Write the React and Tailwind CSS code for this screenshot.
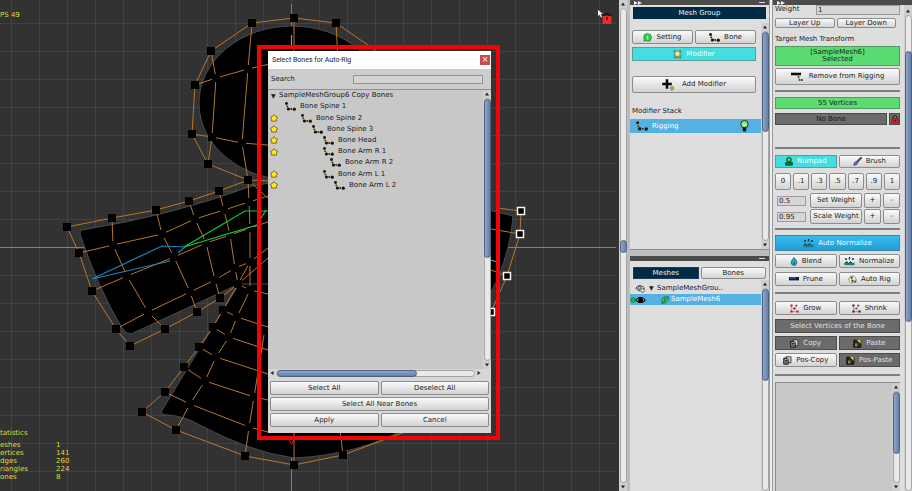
import React from "react";
import clsx from "clsx";

/* ---------- icons ---------- */

const BoneIcon = ({ className = "h-[9px] w-[11px]" }) => (
  <svg viewBox="0 0 11 9" className={clsx("shrink-0", className)} aria-hidden="true">
    <path d="M1.5 1.5 3.2 6.8" stroke="#b8c860" strokeWidth="1.8" />
    <path d="M3.5 7h5" stroke="#e8b088" strokeWidth="1.8" />
    <circle cx="1.5" cy="1.5" r="1.4" fill="#111" />
    <circle cx="2.2" cy="4.4" r="0.8" fill="#222" />
    <circle cx="3.4" cy="7" r="1.6" fill="#111" />
    <circle cx="6.2" cy="7" r="0.9" fill="#222" />
    <circle cx="9.3" cy="7.2" r="1.6" fill="#111" />
  </svg>
);

const StarIcon = () => (
  <svg viewBox="0 0 10 10" className="h-2 w-2" aria-hidden="true">
    <path d="M5 .8 6.8 3 9.4 4 8 6.4 7.9 9.1 5 8.7 2.1 9.1 2 6.4.6 4 3.2 3Z" fill="#ffe818" stroke="#75600c" strokeWidth="1.1" strokeLinejoin="round" />
  </svg>
);

const SettingIcon = () => (
  <svg viewBox="0 0 10 10" className="h-[9px] w-[9px]" aria-hidden="true">
    <path d="M2 1.5 5 .7 8.5 2 9.4 5 8 8.6 5 9 2.5 8.2 1 9 1.5 7 .8 4.5Z" fill="#28d848" stroke="#187030" strokeWidth=".8" />
    <path d="M5 3v4" stroke="#c8ffc8" strokeWidth="1.4" />
  </svg>
);

const ModifierIcon = () => (
  <svg viewBox="0 0 9 9" className="h-[9px] w-[9px]" aria-hidden="true">
    <rect x=".5" y=".5" width="8" height="8" rx="1" fill="#5aa8a0" />
    <circle cx="4.5" cy="3.8" r="2.2" fill="#ffe870" />
    <path d="M3.5 6.2h2v1.8h-2z" fill="#c87818" />
    <path d="M1 1h1.5M6.5 1H8M1 7.5h1.5M6.5 7.5H8" stroke="#2a6a70" />
  </svg>
);

const AddIcon = () => (
  <svg viewBox="0 0 12 12" className="h-3 w-3" aria-hidden="true">
    <path d="M5 .2v9.600M.2 5h9.600" stroke="#0a0a0a" strokeWidth="2.600" />
    <circle cx="10" cy="9" r="1.6" fill="#e8c030" stroke="#5a4a10" strokeWidth=".6" />
    <path d="M9.5 10.6h1v1h-1z" fill="#444" />
  </svg>
);

const BulbIcon = () => (
  <svg viewBox="0 0 9 12" className="h-3 w-[9px]" aria-hidden="true">
    <circle cx="4.5" cy="4.2" r="3.7" fill="#98e080" stroke="#1c3820" strokeWidth="1" />
    <path d="M3.4 4 4.5 6 5.6 4" fill="none" stroke="#f4ffe0" />
    <path d="M2.7 7.6h3.6v3L5 11.8H4l-1.3-1.2z" fill="#151515" />
  </svg>
);

const EyeOffIcon = () => (
  <svg viewBox="0 0 10 9" className="h-[9px] w-[10px]" aria-hidden="true">
    <path d="M.8 4Q4 0 8.5 3M.8 4Q3 7 5 6.8" fill="none" stroke="#333" />
    <circle cx="4.5" cy="3.8" r="1.4" fill="none" stroke="#333" strokeWidth=".9" />
    <circle cx="7.6" cy="6.6" r="1.8" fill="#eee" stroke="#444" strokeWidth=".8" />
    <path d="M9 3.5v1.8" stroke="#333" />
  </svg>
);

const EyeIcon = () => (
  <svg viewBox="0 0 16 8" className="h-2 w-4" aria-hidden="true">
    <circle cx="3" cy="4" r="2.3" fill="#18c838" stroke="#0c7020" strokeWidth=".7" />
    <path d="M5.8 4Q10.5-1.2 15.3 4 10.5 9 5.8 4Z" fill="#cde" stroke="#111" strokeWidth="1.1" />
    <circle cx="10.6" cy="4" r="2.5" fill="#0a0a0a" />
  </svg>
);

const MeshIcon = () => (
  <svg viewBox="0 0 8 8" className="h-2 w-2" aria-hidden="true">
    <path d="M1 3 3 1 7.2.8 7 4.6 4.8 6.8.8 7.4Z" fill="#2ed060" stroke="#146840" strokeWidth=".8" />
    <path d="M1 7 7 1M3 1l1.5 5.6" stroke="#146840" strokeWidth=".7" />
  </svg>
);

const LockIcon = ({ className }) => (
  <svg viewBox="0 0 10 12" className={className} aria-hidden="true">
    <path d="M2 5V3.4Q2.4 1 5 1T8 3.4V5" fill="none" stroke="#30201f" strokeWidth="1.4" />
    <rect x=".5" y="5" width="9" height="6" rx="1" fill="#c9272b" stroke="#601010" strokeWidth=".6" />
    <path d="M4.2 6.4h1.6v2.4H4.2z" fill="#3a0808" />
  </svg>
);

const RemoveIcon = () => (
  <svg viewBox="0 0 12 9" className="h-[9px] w-3" aria-hidden="true">
    <path d="M0 2h10" stroke="#0a0a0a" strokeWidth="2.6" />
    <path d="M7.5 4.5 8.5 8M8.5 8H11" stroke="#b89050" />
    <circle cx="7.5" cy="4.8" r=".9" fill="#222" />
    <circle cx="8.5" cy="8" r=".9" fill="#a22" />
    <circle cx="11" cy="8" r=".9" fill="#222" />
  </svg>
);

const NumpadIcon = () => (
  <svg viewBox="0 0 8 9" className="h-[9px] w-2" aria-hidden="true">
    <circle cx="4" cy="2.8" r="2.4" fill="#1cb04c" stroke="#0b4a28" strokeWidth=".9" />
    <path d="M.6 5.4h6.8v2.8H.6z" fill="#0c7048" stroke="#083828" strokeWidth=".7" />
    <path d="M3 2.8h2M4 1.8v2" stroke="#6f8" strokeWidth=".8" />
  </svg>
);

const BrushIcon = () => (
  <svg viewBox="0 0 9 9" className="h-[9px] w-[9px]" aria-hidden="true">
    <path d="M8 1 4.4 4.6" stroke="#8a2a9c" strokeWidth="2.2" strokeLinecap="round" />
    <path d="M.8 8.2Q1 5 3 4.4L4.8 6Q4 8.2.8 8.2Z" fill="#4a90d8" stroke="#3a1460" strokeWidth=".7" />
  </svg>
);

const NormalizeIcon = () => (
  <svg viewBox="0 0 11 9" className="h-[9px] w-[11px]" aria-hidden="true">
    <path d="M.5 6.500 2.500 4.600 4.500 6.500 6.500 4.600 8.500 6.500 10.500 5V8.200H.5Z" fill="#1d7f7c" />
    <path d="M.5 6.500 2.500 4.600 4.500 6.500 6.500 4.600 8.500 6.500" fill="none" stroke="#123a58" />
    <path d="M2 1v2M5.5 0v2.4M9 1v2" stroke="#15252c" strokeWidth="1.4" />
  </svg>
);

const DropIcon = () => (
  <svg viewBox="0 0 8 9" className="h-[9px] w-2" aria-hidden="true">
    <path d="M4 .5Q7.4 4.2 6.8 6.2 6 8.6 4 8.6T1.2 6.2Q.6 4.2 4 .5Z" fill="#20b8a0" stroke="#125878" strokeWidth=".7" />
    <path d="M4 4Q6 6 4 8 2 7 4 4Z" fill="#2a60d8" />
  </svg>
);

const PruneIcon = () => (
  <svg viewBox="0 0 10 4" className="h-1 w-[10px]" aria-hidden="true">
    <rect width="10" height="3.4" fill="#0f1c30" />
    <rect x="1" y=".4" width="6" height="1.3" fill="#2868c0" />
  </svg>
);

const AutoRigIcon = () => (
  <svg viewBox="0 0 10 10" className="h-[9px] w-[9px]" aria-hidden="true">
    <circle cx="5" cy="5" r="4" fill="#e4ebd4" stroke="#56604c" strokeDasharray="2 1" />
    <path d="M4 3 5 6.6 8 7" fill="none" stroke="#94a030" strokeWidth="1.3" />
    <circle cx="4" cy="2.8" r="1" fill="#222" />
    <circle cx="5" cy="6.6" r="1" fill="#222" />
    <circle cx="8.2" cy="7.4" r="1.2" fill="#28883c" />
  </svg>
);

const DotsIcon = ({ red }) => (
  <svg viewBox="0 0 9 9" className="h-[9px] w-[9px]" aria-hidden="true">
    <path d="M1.500 1.500V7.500H7.500M1.500 4.500H4.500" fill="none" stroke="#99a" strokeWidth=".8" />
    <g fill={red ? "#c41c24" : "#2c2c34"}>
      <path d="M.4.4h2.2v2.2H.4zM.4 6.4h2.2v2.2H.4zM6.4 6.4h2.2v2.2H6.4zM5.4.8h1.8v1.8H5.4z" />
    </g>
    <path d="M3.6 3.6h1.8v1.8H3.6z" fill={red ? "#222" : "#c41c24"} />
  </svg>
);

const CopyIcon = () => (
  <svg viewBox="0 0 9 9" className="h-[9px] w-[9px]" aria-hidden="true">
    <path d="M3 .8h5v6H3z" fill="#ccc" stroke="#222" strokeWidth=".8" />
    <path d="M.8 2.2h3l1.4 1.4v4.6H.8z" fill="#999" stroke="#111" />
    <path d="M2 4.5h2M2 6.2h2" stroke="#111" strokeWidth=".8" />
  </svg>
);

const PasteIcon = () => (
  <svg viewBox="0 0 9 9" className="h-[9px] w-[9px]" aria-hidden="true">
    <path d="M.8 1.2h7v7h-7z" fill="#2b2a1c" stroke="#111" />
    <path d="M3.6.8H7.6v4Z" fill="#e8c840" />
    <path d="M2 4.5h2.4v3H2z" fill="#8a8350" />
  </svg>
);

/* ---------- controls ---------- */

const TONES = {
  light: "border-[#8c8c8c] bg-linear-to-b from-[#fafafa] to-[#d3d3d3] text-[#1c1c1c] rounded-[2px]",
  cyan: "border-[#5b9c9c] bg-[#43dfe0] text-[#f2ffff]",
  blue: "border-[#3c88aa] bg-linear-to-b from-[#38bbee] to-[#1d9fd6] text-[#effbff]",
  navy: "border-[#1b3c52] bg-[#012b45] text-[#e8eff4]",
  gray: "border-[#4b4b4b] bg-[#6b6b6b] text-[#e0e0e0]",
};

function Btn({ tone = "light", icon, className, children, ...rest }) {
  return (
    <button
      type="button"
      className={clsx("flex min-w-0 items-center justify-center gap-1 whitespace-nowrap border leading-none", TONES[tone], className)}
      {...rest}
    >
      {icon}
      {children}
    </button>
  );
}

const Row = ({ className, children }) => <div className={clsx("flex gap-[2px]", className)}>{children}</div>;

const Rule = ({ className }) => <hr className={clsx("h-[2px] border-0 bg-[#7e7e7e]", className)} />;

const Arrow = ({ dir }) => (
  <svg viewBox="0 0 6 6" className="m-px h-[6px] w-[6px] shrink-0" aria-hidden="true">
    <path d={{ up: "M1 4.5h4L3 1.5Z", down: "M1 1.5h4L3 4.5Z", left: "M4.5 1v4L1.5 3Z", right: "M1.5 1v4L4.5 3Z" }[dir]} fill="#222" />
  </svg>
);

/* Vertical scroll bar; the thumb's offset and length come in as classes. */
function VBar({ thumb, className, down = true }) {
  return (
    <div className={clsx("flex w-2 shrink-0 flex-col items-center bg-[#cfcfcf]", className)}>
      <Arrow dir="up" />
      <div className="w-[7px] flex-1 rounded-full border border-[#a4a4a4] bg-[#e9e9e9]">
        <div className={clsx("-mx-px rounded-full border border-[#4c617f] bg-linear-to-r from-[#91a6c8] to-[#647ea6]", thumb)} />
      </div>
      {down && <Arrow dir="down" />}
    </div>
  );
}

/* ---------- viewport drawing ---------- */

const OUTER = [
  [294, 18], [252, 23], [211, 51], [195, 85], [192, 134], [208, 164], [248, 180], [219, 191], [189, 201], [156, 210],
  [112, 218], [67, 227], [79, 253], [92, 291], [116, 329], [130, 346], [165, 329], [197, 312], [220, 298], [238, 284],
  [223, 310], [213, 327], [199, 347], [184, 367], [165, 392], [142, 412], [176, 430], [245, 456], [294, 465], [343, 455],
];
const INNER = [
  [216, 78], [248, 69], [212, 137], [242, 143], [113, 245], [162, 234], [195, 219], [224, 210], [249, 202],
  [127, 276], [174, 257], [206, 243], [230, 235], [250, 228], [148, 312], [190, 292], [215, 280], [235, 268], [250, 262],
  [250, 290], [237, 317], [229, 337], [216, 357], [205, 381], [190, 404], [249, 427], [254, 397],
];
const EDGES = [
  "195,85 216,78 248,69 292,59", "192,134 212,137 242,143 292,147",
  "211,51 216,78 212,137 208,164", "252,23 248,69 242,143 248,180",
  "294,18 294,60", "336,23 338,60", "248,180 292,182", "248,180 270,200",
  "112,218 113,245 127,276 148,312 165,329", "156,210 162,234 174,257 190,292 197,312",
  "189,201 195,219 206,243 215,280 220,298", "219,191 224,210 230,235 235,268 238,284",
  "248,180 249,202 250,228 250,262 238,284",
  "79,253 113,245 162,234 195,219 224,210 249,202 268,196",
  "92,291 127,276 174,257 206,243 230,235 250,228 268,222",
  "116,329 148,312 190,292 215,280 235,268 250,262 268,248",
  "238,284 268,258", "238,284 250,290 268,294", "250,262 250,290",
  "250,290 237,317 229,337 216,357 205,381 190,404 176,430", "223,310 237,317 268,327",
  "213,327 229,337 268,350", "199,347 216,357 268,374", "184,367 205,381 254,397 268,400",
  "165,392 190,404 249,427 268,432", "245,456 249,427 254,397 264,335", "294,465 294,430", "343,455 340,430",
  "497,208 521,211", "491,229 520,234", "491,270 507,276", "521,211 520,234 507,276 491,312 480,330",
];
const SELECTED = [[521, 211], [520, 234], [507, 276], [491, 312]];

function Viewport() {
  const outline = OUTER.map((p) => p.join(",")).join(" ");
  return (
    <svg viewBox="0 0 619 491" preserveAspectRatio="xMinYMin slice" className="block h-full w-full" role="img" aria-label="Mesh viewport">
      <defs>
        <pattern id="grid" x="11" y="23" width="28" height="28" patternUnits="userSpaceOnUse">
          <path d="M.5 0V28M0 .5H28" stroke="#414141" />
        </pattern>
      </defs>
      <rect width="619" height="491" fill="#323232" />
      <rect width="616" height="491" fill="url(#grid)" />
      <path d="M0 247.5H616M291.5 4V491" stroke="#848a36" />
      <g fill="#000" stroke="#4a4a4a" strokeWidth="1">
        <ellipse cx="292" cy="103" rx="93" ry="77" />
        <path d="M82 230Q170 216 252 186L300 178V300L239 284 131 334Q126 334 122 328 98 288 80 234Q80 231 82 230Z" />
        <path d="M239 284 161 412Q162 415 168 415 184 416 200 425 250 452 294 458 360 455 410 426L440 410V284Z" />
        <path d="M480 208 513 216Q511 246 498 278L480 314Z" />
      </g>
      <g fill="none" stroke="#b9762c" strokeWidth="1">
        <polyline points={outline} />
        <path d="M294 18 336 23 375 50M343 455 410 430" />
        {EDGES.map((e) => <polyline key={e} points={e} />)}
      </g>
      {INNER.map(([x, y]) => <rect key={x + "-" + y} x={x - 4} y={y - 4} width="8" height="8" />)}
      {[...OUTER, [336, 23]].map(([x, y]) => <rect key={x + "-" + y} x={x - 4} y={y - 4} width="8" height="8" />)}
      {SELECTED.map(([x, y]) => <rect key={x + "-" + y} x={x - 3.5} y={y - 3.5} width="7" height="7" stroke="#f4f4f4" strokeWidth="1.5" />)}
      <path d="M178 253 185 247 162 246 92 279 170 261" fill="none" stroke="#1f83bd" strokeWidth="1.2" />
      <path d="M268 211H245L184 247 257 225 266 210" fill="none" stroke="#18c838" strokeWidth="1.2" />
      <path d="M291.5 35V48" stroke="#e068e0" strokeWidth="1.2" />
      <path d="M491 260 497 262" stroke="#22b8b8" strokeWidth="1.2" />
      <path d="m289 440 2.500 4 2.500-4" fill="none" stroke="#e01818" />
      <path d="M598 10v6l1.500-1.500 1.500 3 1-.5-1.300-3H603Z" fill="#fff" />
      <path d="M603 16Q607 11 611 16" fill="none" stroke="#151515" strokeWidth="1.4" />
      <rect x="602.500" y="16" width="9" height="8" rx="1" fill="#ea2c2c" />
      <path d="M606 17h2v3h-2z" fill="#501010" />
    </svg>
  );
}

/* ---------- dialog ---------- */

const BONES = [
  ["Bone Spine 1", "pl-[4px]", false],
  ["Bone Spine 2", "pl-[20px]", true],
  ["Bone Spine 3", "pl-[31px]", true],
  ["Bone Head", "pl-[42px]", true],
  ["Bone Arm R 1", "pl-[42px]", true],
  ["Bone Arm R 2", "pl-[49px]", false],
  ["Bone Arm L 1", "pl-[42px]", true],
  ["Bone Arm L 2", "pl-[53px]", true],
];

function Dialog() {
  return (
    <div className="absolute left-[257px] top-[45px] w-[243px] border-4 border-[#f00404] pb-[3px] pl-[7px] pr-[5px] pt-[2px]">
      <section role="dialog" aria-label="Select Bones for Auto-Rig" className="flex h-[382px] flex-col bg-[#d6d6d6]">
        <header className="flex h-[18px] items-center justify-between bg-white pl-1 pr-px">
          <h2 className="font-['Roboto'] text-[7px] leading-none text-[#222]">Select Bones for Auto-Rig</h2>
          <button type="button" aria-label="Close" className="flex h-[10px] w-[10px] items-center justify-center bg-[#c94b50] text-[8px] leading-none text-white">×</button>
        </header>
        <div className="flex h-5 items-center bg-[#cdcdcd] pl-[3px] pr-2">
          <label htmlFor="search" className="w-[82px]">Search</label>
          <input id="search" type="text" className="h-[9px] min-w-0 flex-1 border border-[#939393] bg-[#d4d4d4]" />
        </div>
        <div className="flex min-h-0 flex-1 border-t border-[#8e8e8e]">
          <div className="min-w-0 flex-1 bg-[#c8c8c8]">
            <ul className="flex h-[101px] flex-col">
              <li className="flex flex-1 items-center pl-[3px]">
                <span className="w-2 text-[6px] leading-none">▼</span>
                SampleMeshGroup6 Copy Bones
              </li>
              {BONES.map(([name, indent, near]) => (
                <li key={name} className="flex flex-1 items-center pl-[2px]">
                  <span className="w-[11px] shrink-0">{near && <StarIcon />}</span>
                  <span className={clsx("flex items-center gap-1", indent)}><BoneIcon />{name}</span>
                </li>
              ))}
            </ul>
          </div>
          <VBar thumb="h-[159px]" />
        </div>
        <div className="flex h-2 items-center">
          <Arrow dir="left" />
          <div className="h-[7px] flex-1 rounded-full border border-[#a4a4a4] bg-[#e9e9e9]">
            <div className="-my-px h-[7px] w-[140px] rounded-full border border-[#4c617f] bg-linear-to-b from-[#91a6c8] to-[#647ea6]" />
          </div>
          <Arrow dir="right" />
          <span className="w-2" />
        </div>
        <div className="flex flex-col gap-[2px] px-[2px] pb-[6px] pt-1">
          <Row><Btn className="h-[14px] flex-1">Select All</Btn><Btn className="h-[14px] flex-1">Deselect All</Btn></Row>
          <Btn className="h-[14px]">Select All Near Bones</Btn>
          <Row><Btn className="h-[14px] flex-1">Apply</Btn><Btn className="h-[14px] flex-1">Cancel</Btn></Row>
        </div>
      </section>
    </div>
  );
}

/* ---------- side panels ---------- */

const PanelBar = ({ fold }) => (
  <div className="flex h-[5px] items-center justify-between bg-[#4b4b4b] px-1">
    <svg viewBox="0 0 8 4" className="h-1 w-2" aria-hidden="true">{fold && <path d="M0 0 4 2 0 4M4 0 8 2 4 4" fill="#eee" />}</svg>
    <span className="h-px w-[6px] bg-[#ddd]" />
  </div>
);

function MeshPanels() {
  return (
    <aside className="flex w-[139px] shrink-0 flex-col">
      <section className="flex h-[250px] flex-col border-b border-[#8d8d8d] bg-[#dedede]">
        <PanelBar fold />
        <h2 className="mx-[3px] mt-[2px] flex h-3 items-center justify-center bg-[#012b45] text-[#e8eff4]">Mesh Group</h2>
        <div className="mt-1 flex min-h-0 flex-1">
          <div className="flex min-w-0 flex-1 flex-col">
            <Row className="ml-[2px] mr-[5px] mt-[7px]">
              <Btn className="h-[14px] flex-1" icon={<SettingIcon />}>Setting</Btn>
              <Btn className="h-[14px] flex-1" icon={<BoneIcon />}>Bone</Btn>
            </Row>
            <Btn tone="cyan" className="ml-[2px] mr-[5px] mt-[3px] h-[14px]" icon={<ModifierIcon />}>Modifier</Btn>
            <Btn className="ml-[2px] mr-[5px] mt-[15px] h-[17px]" icon={<AddIcon />}>
              <span className="pl-1">Add Modifier</span>
            </Btn>
            <h3 className="ml-[2px] mt-[14px] h-[12px]">Modifier Stack</h3>
            <div className="flex h-[14px] items-center gap-1 bg-[#55b0e4] pl-[6px] pr-3 text-white">
              <BoneIcon className="h-[10px] w-3" />
              <span className="flex-1">Rigging</span>
              <BulbIcon />
            </div>
          </div>
          <VBar thumb="h-[100px]" />
        </div>
      </section>
      <section className="mt-[6px] flex min-h-0 flex-1 flex-col bg-[#dedede]">
        <PanelBar />
        <Row className="mx-[3px] mt-[6px]">
          <Btn tone="navy" className="h-3 flex-1">Meshes</Btn>
          <Btn className="h-3 flex-1">Bones</Btn>
        </Row>
        <div className="mt-px flex min-h-0 flex-1">
          <ul className="min-w-0 flex-1">
            <li className="flex h-[14px] items-center pl-[5px] pt-[2px]">
              <EyeOffIcon /><span className="w-3 pl-1 text-[6px] leading-none">▼</span>SampleMeshGrou..
            </li>
            <li className="flex h-[11px] items-center bg-[#55b0e4] text-white">
              <EyeIcon /><span className="flex items-center gap-[2px] pl-[15px]"><MeshIcon />SampleMesh6</span>
            </li>
          </ul>
          <VBar thumb="h-[92px]" down={false} />
        </div>
      </section>
    </aside>
  );
}

const FIELD = "h-[10px] min-w-0 border border-[#9b9b9b] bg-[#d6d6d6] pl-px leading-none";

function WeightRow({ id, value, label }) {
  return (
    <Row className="items-center">
      <input id={id} aria-label={label + " value"} type="text" defaultValue={value} className={clsx(FIELD, "mr-[2px] ml-[2px] w-[29px]")} />
      <Btn className="h-[15px] flex-1">{label}</Btn>
      <Btn className="h-[15px] w-[17px]">+</Btn>
      <Btn className="h-[15px] w-[17px]">-</Btn>
    </Row>
  );
}

function RiggingPanel() {
  return (
    <aside className="flex w-[139px] shrink-0 flex-col bg-[#dedede]">
      <div className="flex h-[5px] items-center bg-[#4b4b4b] px-1">
        <svg viewBox="0 0 8 4" className="h-1 w-2" aria-hidden="true"><path d="M0 0 4 2 0 4M4 0 8 2 4 4" fill="#eee" /></svg>
      </div>
      <div className="flex min-h-0 flex-1">
        <div className="flex min-w-0 flex-1 flex-col pl-[2px] pr-1">
          <div className="flex h-[9px] items-center">
            <label htmlFor="weight" className="w-[41px]">Weight</label>
            <input id="weight" type="text" defaultValue="1" className={clsx(FIELD, "flex-1")} />
          </div>
          <Row className="mr-1 mt-1"><Btn className="h-[10px] flex-1">Layer Up</Btn><Btn className="h-[10px] flex-1">Layer Down</Btn></Row>
          <h3 className="mt-[7px] h-[11px]">Target Mesh Transform</h3>
          <p className="flex h-5 flex-col items-center justify-center border border-[#4f9c5c] bg-[#5bdc72] leading-[7px]">
            <span>[SampleMesh6]</span><span>Selected</span>
          </p>
          <Btn className="mt-[2px] h-[17px]" icon={<RemoveIcon />}><span className="pl-[2px]">Remove from Rigging</span></Btn>
          <Rule className="mt-[5px]" />
          <p className="mt-[5px] flex h-3 items-center justify-center border border-[#4f9c5c] bg-[#5bdc72]">55 Vertices</p>
          <Row className="mt-1">
            <p className="flex h-3 flex-1 items-center justify-center border border-[#4b4b4b] bg-[#6b6b6b]">No Bone</p>
            <Btn tone="gray" className="h-3 w-[11px]" aria-label="Lock bone"><LockIcon className="h-[9px] w-2 shrink-0" /></Btn>
          </Row>
          <Rule className="mt-[22px]" />
          <Row className="mt-[6px]">
            <Btn tone="cyan" className="h-[13px] flex-1" icon={<NumpadIcon />}>Numpad</Btn>
            <Btn className="h-[13px] flex-1" icon={<BrushIcon />}>Brush</Btn>
          </Row>
          <Row className="mb-[3px] mt-[5px]">
            {["0", ".1", ".3", ".5", ".7", ".9", "1"].map((n) => <Btn key={n} className="h-[17px] flex-1">{n}</Btn>)}
          </Row>
          <WeightRow id="set" value="0.5" label="Set Weight" />
          <div className="h-px" />
          <WeightRow id="scale" value="0.95" label="Scale Weight" />
          <Rule className="mt-1" />
          <Btn tone="blue" className="mt-[5px] h-4" icon={<NormalizeIcon />}>Auto Normalize</Btn>
          <Row className="mt-[3px]"><Btn className="h-[14px] flex-1" icon={<DropIcon />}>Blend</Btn><Btn className="h-[14px] flex-1" icon={<NormalizeIcon />}>Normalize</Btn></Row>
          <Row className="mt-1"><Btn className="h-[14px] flex-1" icon={<PruneIcon />}>Prune</Btn><Btn className="h-[14px] flex-1" icon={<AutoRigIcon />}>Auto Rig</Btn></Row>
          <Rule className="mt-[6px]" />
          <Row className="mt-[7px]"><Btn className="h-[14px] flex-1" icon={<DotsIcon red />}>Grow</Btn><Btn className="h-[14px] flex-1" icon={<DotsIcon />}>Shrink</Btn></Row>
          <Btn tone="gray" className="mt-1 h-[14px]">Select Vertices of the Bone</Btn>
          <Row className="mt-[3px]"><Btn tone="gray" className="h-[14px] flex-1" icon={<CopyIcon />}>Copy</Btn><Btn tone="gray" className="h-[14px] flex-1" icon={<PasteIcon />}>Paste</Btn></Row>
          <Row className="mt-[3px]"><Btn className="h-[14px] flex-1" icon={<CopyIcon />}>Pos-Copy</Btn><Btn tone="gray" className="h-[14px] flex-1" icon={<PasteIcon />}>Pos-Paste</Btn></Row>
          <Rule className="mt-[7px]" />
          <div className="mt-[6px] flex min-h-0 flex-1 justify-end border-l border-t border-[#8e8e8e] bg-[#c8c8c8]">
            <VBar thumb="h-[62px]" />
          </div>
        </div>
        <VBar className="pt-[2px]" thumb="mt-[35px] h-[271px]" down={false} />
      </div>
    </aside>
  );
}

const STATS = [["eshes", 1], ["ertices", 141], ["dges", 260], ["riangles", 224], ["ones", 8]];

export default function App() {
  return (
    <div className="flex h-screen w-full overflow-hidden bg-[#bdbdbd] font-['DejaVu_Sans',sans-serif] text-[7px] leading-[9px] text-[#1a1a1a]">
      <main className="relative min-w-0 flex-1 overflow-hidden bg-[#323232]">
        <Viewport />
        <p className="absolute left-0 top-[11px] text-[#dede3c]">PS 49</p>
        <div className="absolute bottom-[10px] left-0 text-[#dede3c]">
          <p className="mb-[3px]">tatistics</p>
          <table className="leading-[8px]">
            <tbody>
              {STATS.map(([name, n]) => (
                <tr key={name}>
                  <th scope="row" className="w-14 p-0 text-left font-normal">{name}</th>
                  <td className="p-0">{n}</td>
                </tr>
              ))}
            </tbody>
          </table>
        </div>
        <Dialog />
      </main>
      <VBar thumb="mt-[231px] h-[13px]" />
      <div className="w-[3px] shrink-0" />
      <MeshPanels />
      <div className="w-1 shrink-0 border-x border-[#999] bg-[#eee]" />
      <RiggingPanel />
    </div>
  );
}
